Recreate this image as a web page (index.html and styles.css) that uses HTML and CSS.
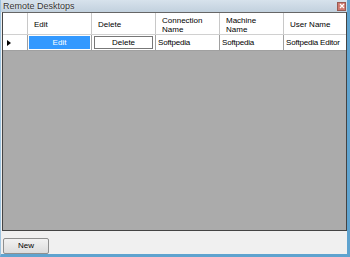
FILE: index.html
```html
<!DOCTYPE html>
<html lang="en">
<head>
  <meta charset="UTF-8" />
  <title>Remote Desktops</title>
  <link rel="stylesheet" href="styles.css">
</head>
<body>
  <div class="window">
    <div class="titlebar">
      <span class="title">Remote Desktops</span>
      <span class="close">
        <svg width="6" height="6" viewBox="0 0 6 6"><path d="M1 1L5 5M5 1L1 5" stroke="#fff" stroke-width="1.2"/></svg>
      </span>
    </div>

    <div class="grid">
      <div class="row head">
        <div class="rowhead"></div>
        <div class="cell">Edit</div>
        <div class="cell">Delete</div>
        <div class="cell">Connection<br>Name</div>
        <div class="cell">Machine<br>Name</div>
        <div class="cell last">User Name</div>
      </div>
      <div class="row data">
        <div class="rowhead"><span class="arrow"></span></div>
        <div class="cell btncell"><span class="editbtn">Edit</span></div>
        <div class="cell btncell"><span class="delbtn">Delete</span></div>
        <div class="cell">Softpedia</div>
        <div class="cell">Softpedia</div>
        <div class="cell last">Softpedia Editor</div>
      </div>
    </div>

    <div class="footer">
      <button class="new">New</button>
    </div>
  </div>
</body>
</html>
```

FILE: styles.css
```css
body {
  margin: 0;
  font-family: "Liberation Sans", Arial, sans-serif;
  font-size: 8px;
  color: #000;
}
.window {
  width: 350px;
  height: 257px;
  box-sizing: border-box;
  background: #f0f0f0;
  border-left: 1px solid #9ec3df;
  border-right: 3px solid #5fa3cf;
  border-bottom: 3px solid #5fa3cf;
  display: flex;
  flex-direction: column;
}
.titlebar {
  height: 12px;
  background: linear-gradient(#d7e2ec, #c2d1de);
  display: flex;
  align-items: center;
  justify-content: space-between;
  padding: 0 1px 0 2px;
}
.title {
  font-size: 9px;
  color: #333;
  text-shadow: 0 0 2px #fff;
}
.close {
  width: 7px;
  height: 7px;
  background: #cf7a70;
  border: 1px solid #9a5a52;
  display: flex;
  align-items: center;
  justify-content: center;
}
.grid {
  margin: 0 0 0 1px;
  height: 219px;
  box-sizing: border-box;
  background: #ababab;
  border: 1px solid #444;
  border-top-color: #666;
}
.row {
  display: flex;
  background: #fff;
  border-bottom: 1px solid #a0a0a0;
  white-space: nowrap;
}
.row.head {
  height: 21px;
  border-bottom-color: #d0d0d0;
}
.row.data {
  height: 15px;
}
.rowhead {
  width: 25px;
  border-right: 1px solid #a0a0a0;
  display: flex;
  align-items: center;
  padding-left: 4px;
  box-sizing: border-box;
}
.head .rowhead,
.head .cell {
  border-right-color: #c8c8c8;
}
.arrow {
  width: 0;
  height: 0;
  border-top: 3px solid transparent;
  border-bottom: 3px solid transparent;
  border-left: 4px solid #000;
}
.cell {
  width: 64px;
  box-sizing: border-box;
  border-right: 1px solid #a0a0a0;
  display: flex;
  align-items: center;
  padding-left: 2px;
  line-height: 9px;
  letter-spacing: -0.2px;
}
.cell.last {
  flex: 1;
  border-right: none;
}
.head .cell {
  padding-left: 6px;
  padding-top: 2px;
  letter-spacing: 0;
}
.btncell {
  padding: 1px;
  letter-spacing: 0;
}
.editbtn {
  flex: 1;
  height: 13px;
  background: #3399ff;
  color: #fff;
  display: flex;
  align-items: center;
  justify-content: center;
}
.delbtn {
  flex: 1;
  height: 11px;
  margin: 0 1px;
  background: #fff;
  border: 1px solid #777;
  display: flex;
  align-items: center;
  justify-content: center;
}
.footer {
  flex: 1;
  display: flex;
  align-items: center;
  padding-left: 2px;
}
.new {
  width: 46px;
  height: 16px;
  margin-top: 6px;
  font-family: "Liberation Sans", Arial, sans-serif;
  font-size: 8px;
  background: linear-gradient(#f2f2f2, #dcdcdc);
  border: 1px solid #8e8f8f;
  border-radius: 2px;
  padding: 0;
}
```
